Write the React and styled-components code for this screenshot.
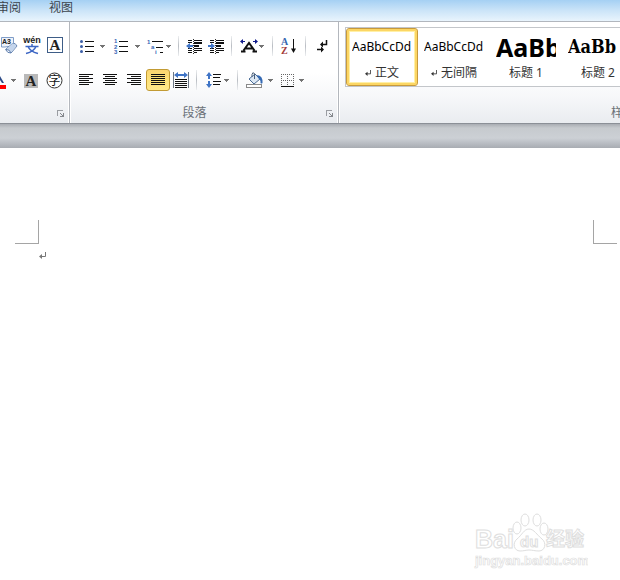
import React, { useState } from 'react';
import styled, { createGlobalStyle } from 'styled-components';

const UI_FONT = "'Noto Sans', 'Noto Sans CJK SC', sans-serif";

const GlobalStyle = createGlobalStyle`
  * { box-sizing: border-box; }
  body { margin: 0; overflow: hidden; }
  button { font: inherit; color: inherit; }
`;

const Caret = () => (
  <svg width="5" height="3" viewBox="0 0 5 3" shapeRendering="crispEdges">
    <path d="M0 0h5v1h-1v1h-1v1h-1v-1h-1v-1h-1z" fill="#737373" />
  </svg>
);

const Icon = ({ w = 16, children }) => (
  <svg width={w} height="16" viewBox={`0 0 ${w} 16`} fill="none" overflow="visible">{children}</svg>
);

const Lines = ({ d, color = '#111' }) => (
  <path d={d} stroke={color} shapeRendering="crispEdges" />
);

const BLUE = '#3565b5';

const tiny = { fontFamily: 'Liberation Sans, sans-serif', fontWeight: 700, fontSize: 6, fill: BLUE };

const EraserIcon = () => (
  <Icon w={18}>
    <path d="M1.500 -.500h12v9H8L5 9H1.500z" fill="#eef3fb" stroke="#7f9cc7" />
    <text x="2" y="6" fontFamily="Liberation Sans, sans-serif" fontWeight="700" fontSize="7" fill="#222">A3</text>
    <path d="M5.500 11.500l7-6q3-1 4.500 2.500l-6 7q-3.500.500-5.500-3.500z" fill="#f5f8fd" stroke="#5d7dac" />
    <path d="M6.300 11.300q3-.500 4.200 3.500l6-6.500q-1-3-4-2.700z" fill="#c4d5ec" />
    <path d="M6 11.500q3.500-.500 5 3.500" stroke="#5d7dac" />
  </Icon>
);

const PhoneticIcon = () => (
  <Icon w={18}>
    <text x="9" y="5" textAnchor="middle" fontFamily="Liberation Sans, sans-serif" fontWeight="700" fontSize="9" fill="#222">wén</text>
    <path d="M2.500 8.500h13M9 6v2.500M5 8.500q2 5 10 7M13 8.500q-2 5-10 7" stroke="#3c66c4" strokeWidth="1.500" />
  </Icon>
);

const BorderedAIcon = () => (
  <Icon>
    <rect x=".500" y="-.500" width="15" height="15" fill="#fff" stroke="#3e5d87" />
    <text x="8" y="12" textAnchor="middle" fontFamily="Liberation Serif, serif" fontWeight="700" fontSize="15" fill="#222">A</text>
  </Icon>
);

const FontColorIcon = () => (
  <Icon w={5}>
    <path d="M-2 4l4 7H0L-2 8z" fill="#2c4a86" />
    <rect x="-2" y="13" width="6" height="4" fill="#f00" />
  </Icon>
);

const ShadedAIcon = () => (
  <Icon>
    <rect x="0" y="2" width="14" height="14" fill="#b9b9b9" />
    <text x="7" y="14" textAnchor="middle" fontFamily="Liberation Serif, serif" fontWeight="700" fontSize="15" fill="#222">A</text>
  </Icon>
);

const EnclosedIcon = () => (
  <Icon>
    <circle cx="7.500" cy="8.500" r="7.500" fill="#fff" stroke="#333" />
    <text x="7.500" y="13" textAnchor="middle" fontFamily="Noto Sans CJK SC, sans-serif" fontSize="12" fill="#111">字</text>
  </Icon>
);

const BulletsIcon = () => (
  <Icon w={18}>
    {[3, 8, 13].map((y) => <circle key={y} cx="3.500" cy={y + 0.5} r="1.500" fill="#3c5fa8" />)}
    <Lines d="M7 3.500h9M7 8.500h9M7 13.500h9" />
  </Icon>
);

const NumberingIcon = () => (
  <Icon w={18}>
    <text x="1" y="5" {...tiny}>1</text>
    <text x="1" y="11" {...tiny}>2</text>
    <text x="1" y="16" {...tiny}>3</text>
    <Lines d="M6 3.500h9M6 8.500h9M6 13.500h9" />
  </Icon>
);

const MultilevelIcon = () => (
  <Icon w={18}>
    <text x="0" y="6" {...tiny}>1</text>
    <text x="4" y="11" {...tiny}>a</text>
    <text x="8" y="16" {...tiny}>i</text>
    <Lines d="M5 3.500h11M9 9.500h7M13 14.500h3" />
  </Icon>
);

const IndentIcon = ({ right }) => (
  <Icon>
    <Lines d="M2 2.500h4M8 2.500h8M2 12.500h4M8 12.500h8M2 10.500h4M8 14.500h3M2 4.500h4M2 14.500h4" />
    <path d="M8 4h8v2H8zM8 7h5v2H8zM8 10h8v1H8z" fill="#111" />
    <path d="M7.500 1v15" stroke="#333" strokeDasharray="1 1" shapeRendering="crispEdges" />
    <path d={right ? 'M0 7h3V5l4 3-4 3V9H0z' : 'M7 7H4V5L0 8l4 3V9h3z'} fill="#3f74c6" />
  </Icon>
);

const ScalingIcon = () => (
  <Icon w={18}>
    <path d="M3.500 12.500L9 5l5.500 7.500M5.500 10.500h7M1 13.500h4.500M12.500 13.500H17" stroke="#111" strokeWidth="2" />
    <path d="M0 3.500L3 1v2h2v1H3v2zM18 3.500L15 1v2h-2v1h2v2z" fill="#101a8a" />
  </Icon>
);

const SortIcon = () => (
  <Icon>
    <text x="0" y="7" fontFamily="Liberation Serif, serif" fontWeight="700" fontSize="10" fill="#3666b0">A</text>
    <text x="0" y="16" fontFamily="Liberation Serif, serif" fontWeight="700" fontSize="10" fill="#a33a3a">Z</text>
    <path d="M12.500 1v11" stroke="#111" />
    <path d="M10 10.500h5L12.500 15z" fill="#111" />
  </Icon>
);

const MarksIcon = () => (
  <Icon>
    <path d="M12.500 2v4.500H7M3 11.500h6" stroke="#111" strokeWidth="1.500" />
    <path d="M6 6.500L9 3.500v6zM10 11.500L7 8.500v6z" fill="#111" />
  </Icon>
);

const alignStarts = {
  left: [1, 1],
  center: [1, 3],
  right: [1, 5],
  justify: [1, 1],
};

const AlignIcon = ({ kind }) => {
  const [long, short] = alignStarts[kind];
  const shortWidth = kind === 'justify' ? 14 : 10;
  const d = [2, 4, 6, 8, 10, 12]
    .map((y, i) => (i % 2 ? `M${short} ${y + 0.5}h${shortWidth}` : `M${long} ${y + 0.5}h14`))
    .join('');
  return <Icon><Lines d={d} /></Icon>;
};

const DistributeIcon = () => (
  <Icon>
    <Lines d="M.500 0v16M15.500 0v16" color="#6b7685" />
    <Lines d="M2 7.500h12M2 9.500h12M2 11.500h12M2 13.500h12M2 15.500h12" />
    <path d="M1 3l4-3v2h6V0l4 3-4 3V4H5v2z" fill="#3f74c6" />
  </Icon>
);

const SpacingIcon = () => (
  <Icon w={18}>
    <path d="M4 0l3 4H5v3H3V4H1zM4 16l3-4H5V9H3v3H1z" fill="#3f74c6" />
    <Lines d="M8 2.500h8M8 5.500h7M8 9.500h8M8 12.500h7" />
  </Icon>
);

const BucketIcon = () => (
  <Icon w={18}>
    <path d="M3 7l6-5 5 5-6 5z" fill="#dce7f3" stroke="#486b96" />
    <path d="M8.500 7V1.500q-2-2-2.500 1V5" stroke="#4b5f78" />
    <path d="M11 3q6 .500 5.500 8-1 1-2 0 .500-3-2.500-5z" fill="#3469b3" />
    <rect x=".500" y="12.500" width="15" height="3" fill="#fff" stroke="#8a8a8a" />
  </Icon>
);

const BordersIcon = () => (
  <Icon w={14}>
    <path d="M0 2.500h13M0 8.500h13M.500 2v12M6.500 2v12M12.500 2v12" stroke="#666" strokeDasharray="1 1" shapeRendering="crispEdges" />
    <Lines d="M0 14.500h13" />
  </Icon>
);

const ReturnMark = ({ size = 6, color = '#333' }) => (
  <svg width={size} height={size} viewBox="0 0 7 7" fill="none">
    <path d="M6.500 0v4.500H2" stroke={color} />
    <path d="M0 4.500L3 2v5z" fill={color} />
  </svg>
);

const LauncherIcon = () => (
  <svg width="7" height="7" viewBox="0 0 7 7" fill="none" shapeRendering="crispEdges">
    <path d="M6 .500H.500V6" stroke="#9a9da2" />
    <path d="M3 3l3 3M6.500 3v3.500H3M5 5h2v2h-2z" stroke="#85888d" />
  </svg>
);

const Screen = styled.div`
  display: flex;
  flex-direction: column;
  min-height: 100vh;
  font-family: ${UI_FONT};
  font-size: 12px;
  line-height: 16px;
  color: #333;
  background: #fff;
`;

const TabBar = styled.nav`
  display: flex;
  height: 22px;
  border-bottom: 1px solid #b1b6bd;
  background: linear-gradient(#a5d0f3, #cbe4f8 50%, #e9f4fd);
`;

const Tab = styled.button`
  display: flex;
  justify-content: flex-end;
  align-items: flex-start;
  width: ${({ $cut }) => ($cut ? 35 : 52)}px;
  padding: 0 14px 0 0;
  overflow: hidden;
  white-space: nowrap;
  border: 0;
  background: none;
  color: #3c434b;
`;

const Ribbon = styled.div`
  display: flex;
  height: 102px;
  overflow: hidden;
  border-bottom: 1px solid #8b9097;
  background: linear-gradient(#fff 50%, #f6f7f9 75%, #e9ecf0);
`;

const Group = styled.section`
  display: flex;
  flex-direction: column;
  flex: none;
  padding-top: ${({ $gallery }) => ($gallery ? 5 : 12)}px;
  padding-left: ${({ $inset = 0 }) => $inset}px;
  width: ${({ $width }) => $width}px;
  border-right: 1px solid #b3b7bd;
  box-shadow: inset -1px 0 #fff, 1px 0 #fff;
`;

const ToolRow = styled.div`
  display: flex;
  align-items: center;
  gap: ${({ $gap = 0 }) => $gap}px;
  height: 24px;
  margin-bottom: 10px;
`;

const Tool = styled.button`
  display: flex;
  align-items: center;
  justify-content: center;
  flex: none;
  gap: ${({ $gap = 4 }) => $gap}px;
  width: ${({ $width = 24 }) => $width}px;
  height: 22px;
  padding: 0;
  border: 1px solid ${({ $active }) => ($active ? '#c29b34' : 'transparent')};
  border-radius: 3px;
  background: ${({ $active }) => ($active ? 'linear-gradient(#fbd570, #fde27a 50%, #ffe88a)' : 'none')};

  svg {
    flex: none;
  }
`;

const Separator = styled.span`
  flex: none;
  width: 1px;
  height: 20px;
  margin: 0 4px;
  background: linear-gradient(#eceef0, #b9bdc3 50%, #eceef0);
`;

const GroupFooter = styled.footer`
  display: flex;
  align-items: center;
  height: 20px;
  margin-top: auto;
  padding-right: 5px;
  color: #6a7077;
`;

const GroupName = styled.span`
  flex: 1;
  text-align: center;
`;

const Launcher = styled.button`
  display: flex;
  justify-content: flex-end;
  width: 18px;
  padding: 0;
  border: 0;
  background: none;
`;

const Gallery = styled.div`
  display: flex;
  height: 60px;
  margin-left: 6px;
  border: 1px solid #c3c6ca;
  background: #fff;
`;

const StyleCard = styled.button`
  display: flex;
  flex-direction: column;
  flex: none;
  width: 72px;
  padding: 0 4px;
  border: 1px solid ${({ $active }) => ($active ? '#c79a3c' : 'transparent')};
  border-radius: 3px;
  background: none;
  box-shadow: ${({ $active }) => ($active ? 'inset 0 0 0 2px #fcd664, inset 0 0 0 3px #fff0a8' : 'none')};
`;

const Preview = styled.span`
  display: flex;
  align-items: center;
  align-self: stretch;
  height: 36px;
  margin: 0 1px;
  overflow: hidden;
  white-space: nowrap;
  color: #000;
  font-family: ${({ $serif }) => ($serif ? "'DejaVu Serif Condensed', 'DejaVu Serif', serif" : UI_FONT)};
  font-size: ${({ $size = 12 }) => $size}px;
  font-weight: ${({ $size }) => ($size ? 700 : 400)};
`;

const StyleName = styled.span`
  display: flex;
  align-items: center;
  justify-content: center;
  gap: 4px;
`;

const Desk = styled.div`
  height: 24px;
  background: linear-gradient(#a9adb3, #c6cace 4px, #ccd0d5 14px, #a8acb2);
`;

const Page = styled.main`
  position: relative;
  flex: 1;
  padding: 72px 3px 0 15px;
`;

const Margins = styled.div`
  display: flex;
  justify-content: space-between;
`;

const CropMark = styled.span`
  width: 24px;
  height: 24px;
  border-bottom: 1px solid #a5a5a5;
  border-${({ $side }) => $side}: 1px solid #a5a5a5;
`;

const Paragraph = styled.div`
  display: flex;
  padding: 8px 24px;
`;

const Watermark = styled.svg`
  position: absolute;
  right: 32px;
  bottom: 10px;
`;

const WatermarkLogo = () => (
  <Watermark width="116" height="60" viewBox="0 0 116 60" fill="#fff" stroke="#dedede">
    <g fontFamily="Liberation Sans, sans-serif" fontWeight="700">
      <text x="3" y="38" fontSize="25">Bai</text>
      <path d="M57 19c-5 0-7 6-12 10-5 4-3 12 3 12 4 0 6-1 9-1s6 1 10 1c6 0 8-8 3-12-5-4-8-10-13-10z" />
      <ellipse cx="45" cy="18" rx="4" ry="6" />
      <ellipse cx="53" cy="10" rx="4" ry="6" />
      <ellipse cx="65" cy="10" rx="4" ry="6" />
      <ellipse cx="72" cy="19" rx="4" ry="6" />
      <text x="48" y="37" fontSize="15">du</text>
      <text x="3" y="55" fontSize="13" strokeWidth=".700">jingyan.baidu.com</text>
    </g>
    <text x="74" y="36" fontSize="19" fontWeight="700" fontFamily="Noto Sans CJK SC, sans-serif">经验</text>
  </Watermark>
);

const styleList = [
  { name: '正文', sample: 'AaBbCcDd', mark: true },
  { name: '无间隔', sample: 'AaBbCcDd', mark: true },
  { name: '标题 1', sample: 'AaBb', size: 25 },
  { name: '标题 2', sample: 'AaBb', size: 18, serif: true },
];

const FontGroup = () => (
  <Group $width={70}>
    <ToolRow $gap={5}>
      <Tool $width={18} aria-label="清除格式"><EraserIcon /></Tool>
      <Tool $width={18} aria-label="拼音指南"><PhoneticIcon /></Tool>
      <Tool $width={18} aria-label="字符边框"><BorderedAIcon /></Tool>
    </ToolRow>
    <ToolRow $gap={5}>
      <Tool $width={18} aria-label="字体颜色"><FontColorIcon /><Caret /></Tool>
      <Tool $width={18} aria-label="字符底纹"><ShadedAIcon /></Tool>
      <Tool $width={18} aria-label="带圈字符"><EnclosedIcon /></Tool>
    </ToolRow>
    <GroupFooter>
      <GroupName />
      <Launcher aria-label="字体设置"><LauncherIcon /></Launcher>
    </GroupFooter>
  </Group>
);

const ParagraphGroup = () => {
  const [align, setAlign] = useState('justify');

  return (
    <Group $width={269} $inset={4}>
      <ToolRow>
        <Tool $width={35} aria-label="项目符号"><BulletsIcon /><Caret /></Tool>
        <Tool $width={35} aria-label="编号"><NumberingIcon /><Caret /></Tool>
        <Tool $width={30} $gap={1} aria-label="多级列表"><MultilevelIcon /><Caret /></Tool>
        <Separator />
        <Tool $width={22} aria-label="减少缩进量"><IndentIcon /></Tool>
        <Tool $width={22} aria-label="增加缩进量"><IndentIcon right /></Tool>
        <Separator />
        <Tool $width={32} $gap={1} aria-label="中文版式"><ScalingIcon /><Caret /></Tool>
        <Separator />
        <Tool aria-label="排序"><SortIcon /></Tool>
        <Separator />
        <Tool aria-label="显示编辑标记"><MarksIcon /></Tool>
      </ToolRow>
      <ToolRow>
        {['left', 'center', 'right', 'justify'].map((kind) => (
          <Tool key={kind} $active={align === kind} aria-label={kind} onClick={() => setAlign(kind)}>
            <AlignIcon kind={kind} />
          </Tool>
        ))}
        <Tool $width={22} aria-label="分散对齐"><DistributeIcon /></Tool>
        <Separator />
        <Tool $width={32} $gap={1} aria-label="行距"><SpacingIcon /><Caret /></Tool>
        <Separator />
        <Tool $width={35} aria-label="底纹"><BucketIcon /><Caret /></Tool>
        <Tool $width={31} aria-label="边框"><BordersIcon /><Caret /></Tool>
      </ToolRow>
      <GroupFooter>
        <GroupName>段落</GroupName>
        <Launcher aria-label="段落设置"><LauncherIcon /></Launcher>
      </GroupFooter>
    </Group>
  );
};

const StylesGroup = () => {
  const [current, setCurrent] = useState('正文');

  return (
    <Group $width={592} $gallery>
      <Gallery>
        {styleList.map(({ name, sample, mark, size, serif }) => (
          <StyleCard key={name} $active={current === name} onClick={() => setCurrent(name)}>
            <Preview $size={size} $serif={serif}>{sample}</Preview>
            <StyleName>{mark && <ReturnMark />}{name}</StyleName>
          </StyleCard>
        ))}
      </Gallery>
      <GroupFooter>
        <GroupName>样式</GroupName>
        <Launcher aria-label="样式设置"><LauncherIcon /></Launcher>
      </GroupFooter>
    </Group>
  );
};

const App = () => (
  <Screen>
    <GlobalStyle />
    <TabBar>
      <Tab $cut>审阅</Tab>
      <Tab>视图</Tab>
    </TabBar>
    <Ribbon>
      <FontGroup />
      <ParagraphGroup />
      <StylesGroup />
    </Ribbon>
    <Desk />
    <Page>
      <Margins>
        <CropMark $side="right" />
        <CropMark $side="left" />
      </Margins>
      <Paragraph><ReturnMark size={7} color="#777" /></Paragraph>
      <WatermarkLogo />
    </Page>
  </Screen>
);

export default App;
